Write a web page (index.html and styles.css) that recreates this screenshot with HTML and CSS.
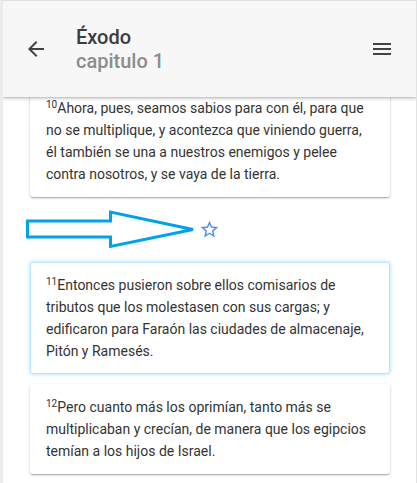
FILE: index.html
```html
<!DOCTYPE html>
<html lang="es">
<head>
<meta charset="utf-8">
<title>Éxodo capitulo 1</title>
<link rel="stylesheet" href="styles.css">
</head>
<body>
<div class="frame">
  <header class="topbar">
    <button class="icon-btn back" aria-label="Volver">
      <svg viewBox="0 0 24 24" width="24" height="24"><path d="M20 11H7.83l5.59-5.59L12 4l-8 8 8 8 1.41-1.41L7.83 13H20v-2z"/></svg>
    </button>
    <div class="titles">
      <div class="title">Éxodo</div>
      <div class="subtitle">capitulo 1</div>
    </div>
    <button class="icon-btn menu" aria-label="Menú">
      <svg viewBox="0 0 24 24" width="24" height="24"><path d="M3 18h18v-2H3v2zm0-5h18v-2H3v2zm0-7v2h18V6H3z"/></svg>
    </button>
  </header>
  <main class="content">
    <div class="list">
      <article class="card">
        <p class="verse"><sup>10</sup>Ahora, pues, seamos sabios para con él, para que no se multiplique, y acontezca que viniendo guerra, él también se una a nuestros enemigos y pelee contra nosotros, y se vaya de la tierra.</p>
      </article>
      <div class="marker-row">
        <svg class="arrow" viewBox="0 0 172 40" width="172" height="40"><polygon points="2.5,11 85.5,11 85.5,2 168,19.5 85.5,36.5 85.5,27 2.5,27" fill="none" stroke="#00a2e8" stroke-width="3"/></svg>
        <svg class="star" viewBox="0 0 24 24" width="21" height="21"><path d="M22 9.24l-7.19-.62L12 2 9.19 8.63 2 9.24l5.46 4.73L5.82 21 12 17.27 18.18 21l-1.630-7.03L22 9.24zM12 15.4l-3.76 2.27 1-4.28-3.32-2.88 4.38-.38L12 6.1l1.71 4.04 4.38.38-3.32 2.88 1 4.28L12 15.4z"/></svg>
      </div>
      <article class="card selected">
        <p class="verse"><sup>11</sup>Entonces pusieron sobre ellos comisarios de tributos que los molestasen con sus cargas; y edificaron para Faraón las ciudades de almacenaje, Pitón y Ramesés.</p>
      </article>
      <article class="card">
        <p class="verse"><sup>12</sup>Pero cuanto más los oprimían, tanto más se multiplicaban y crecían, de manera que los egipcios temían a los hijos de Israel.</p>
      </article>
    </div>
  </main>
</div>
</body>
</html>
```
FILE: styles.css
```css
* { box-sizing: border-box; }
html, body { margin: 0; padding: 0; }
body {
  font-family: Roboto, "Liberation Sans", Arial, sans-serif;
  background: #fff;
  width: 417px;
  height: 483px;
  overflow: hidden;
}
.frame {
  height: 483px;
  border-top: 1px solid #e2e2e2;
  border-left: 3px solid #ececec;
  border-right: 1px solid #e2e2e2;
  display: flex;
  flex-direction: column;
  overflow: hidden;
}
.topbar {
  position: relative;
  z-index: 2;
  flex: 0 0 96px;
  display: flex;
  align-items: center;
  background: #f7f7f7;
  padding: 0 22px 0 21px;
  box-shadow: 0 2px 3px rgba(0,0,0,0.18), 0 1px 1px rgba(0,0,0,0.08);
}
.icon-btn {
  border: 0;
  background: none;
  padding: 0;
  width: 24px;
  height: 24px;
  display: flex;
  fill: #424242;
}
.titles {
  flex: 1;
  margin-left: 28px;
  font-size: 20px;
  line-height: 24px;
  font-weight: 500;
}
.title { color: #3c3c3c; }
.subtitle { color: #8c8c8c; }
.content {
  flex: 1;
  padding: 0 26px 0 27px;
}
.list {
  margin-top: -12px;
  display: flex;
  flex-direction: column;
}
.card {
  background: #fff;
  border-radius: 3px;
  padding: 12px 16px;
  box-shadow: 0 1px 3px rgba(0,0,0,0.2), 0 1px 1px rgba(0,0,0,0.12), 0 2px 1px -1px rgba(0,0,0,0.1);
  margin-bottom: 10px;
}
.card.selected {
  border: 1px solid #b8e6fa;
  padding: 11px 15px;
  box-shadow: 0 0 4px rgba(79,195,247,0.55);
}
.verse {
  margin: 0;
  font-size: 14px;
  line-height: 22px;
  color: #333;
}
.verse sup {
  font-size: 10px;
  line-height: 0;
  vertical-align: 5px;
}
.marker-row {
  height: 65px;
  margin-top: -10px;
  display: flex;
  align-items: center;
  margin-left: -5px;
}
.arrow { display: block; }
.star {
  display: block;
  margin-left: 2px;
  fill: #4d8cf2;
}
```
